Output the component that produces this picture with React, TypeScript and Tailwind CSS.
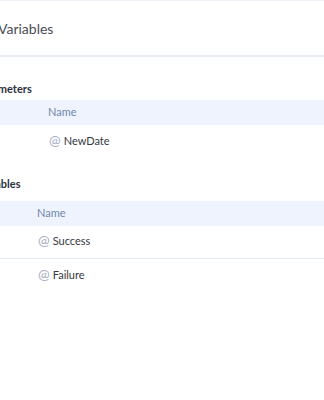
import React from "react";

const font = { fontFamily: "Lato, 'Noto Sans', sans-serif" };

function Section({
  title,
  nameLeft,
  rows,
  headGap,
}: {
  title: string;
  nameLeft: string;
  rows: string[];
  headGap: string;
}) {
  return (
    <div className="flex flex-col">
      <div className={"pl-[16px] h-[22px] flex items-center text-[11px] font-bold text-[#2c313d] " + headGap}>
        {title}
      </div>
      <div className="h-[25px] bg-[#eef3fd] flex items-center text-[11px] text-[#6f86ad]">
        <div className={nameLeft}>Name</div>
      </div>
      {rows.map((r, i) => (
        <div
          key={r}
          className={
            "h-[33px] flex items-center text-[11px] text-[#343840] " +
            (i < rows.length - 1 ? "border-b border-[#e4eaf3]" : "")
          }
        >
          <div className={nameLeft + " flex items-baseline leading-[16px] -mt-[3px]"}>
            <span className="text-[14px] text-[#a3aec0] mr-[3px] ml-[1px]">@</span>
            <span>{r}</span>
          </div>
        </div>
      ))}
    </div>
  );
}

export default function App() {
  return (
    <div className="w-[324px] h-[400px] overflow-hidden bg-white" style={font}>
      <div className="-ml-[40px] w-[364px] flex flex-col border-t border-[#eef1f5]">
        <div className="h-[54px] flex items-center pl-[38px] text-[14px] text-[#4a4d55]">
          Variables
        </div>
        <div className="border-t-2 border-[#e6ecf2]" />
        <div className="pt-[21px] flex flex-col">
          <Section title="Parameters" nameLeft="pl-[88px]" rows={["NewDate"]} headGap="" />
        </div>
        <div className="pt-[15px] flex flex-col">
          <Section title="Variables" nameLeft="pl-[77px]" rows={["Success", "Failure"]} headGap="mb-[6px]" />
        </div>
      </div>
    </div>
  );
}
